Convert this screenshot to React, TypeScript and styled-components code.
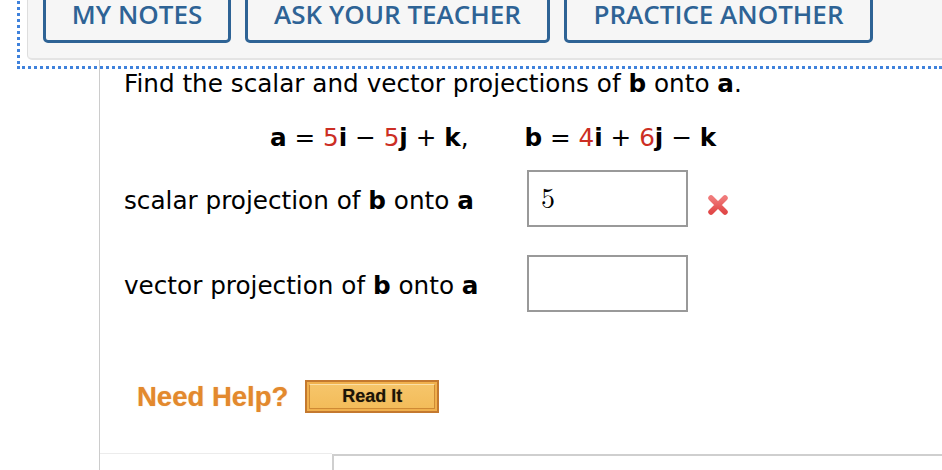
import React from "react";
import styled, { createGlobalStyle } from "styled-components";

const Global = createGlobalStyle`
  html, body { margin: 0; padding: 0; background: #fff; }
  body { width: 942px; height: 470px; overflow: hidden; font-family: "DejaVu Sans", Verdana, sans-serif; }
`;

const Page = styled.div`
  width: 942px;
  height: 470px;
  display: flex;
  flex-direction: column;
  overflow: hidden;
`;

const Header = styled.div`
  position: relative;
  margin-left: 27px;
  background: #f6f6f6;
  border-left: 1px solid #dedede;
  border-bottom: 2px solid #e4e4e4;
  border-bottom-left-radius: 5px;
  padding: 0 0 15px 15px;
  display: flex;
  gap: 14px;
  &::after {
    content: "";
    position: absolute;
    left: -11px;
    top: -10px;
    right: 0;
    bottom: -11px;
    border-left: 3px dotted #3f82dc;
    border-bottom: 3px dotted #3f82dc;
    pointer-events: none;
  }
`;

const TabButton = styled.button<{ $w: number }>`
  width: ${(p) => p.$w}px;
  height: 62px;
  margin-top: -19px;
  box-sizing: border-box;
  background: #f6f6f6;
  border: 3px solid #2e6395;
  border-radius: 5px;
  color: #2e6395;
  font-family: "Open Sans", sans-serif;
  font-size: 26px;
  font-weight: 600;
  line-height: 30px;
  display: flex;
  align-items: flex-end;
  justify-content: center;
  padding: 0 0 11px;
`;

const Body = styled.div`
  margin-left: 99px;
  border-left: 1px solid #cccccc;
  padding: 10px 0 0 24px;
  flex: 1;
  display: flex;
  flex-direction: column;
  color: #000;
  font-family: "DejaVu Sans", Verdana, sans-serif;
  font-size: 24.7px;
  line-height: 28px;
`;

const Prompt = styled.div``;

const Equation = styled.div`
  margin: 26px 0 0 146px;
  display: flex;
  gap: 56px;
`;

const Coef = styled.span`
  color: #cc2e24;
`;

const Rows = styled.div`
  margin-top: 18px;
  display: grid;
  grid-template-columns: 403px 161px auto;
  grid-auto-rows: 57px;
  row-gap: 28px;
  align-items: center;
`;

const Label = styled.div`
  padding-top: 4px;
`;

const AnswerBox = styled.div`
  box-sizing: border-box;
  width: 161px;
  height: 57px;
  border: 2px solid #999;
  background: #fff;
  display: flex;
  align-items: center;
  padding-left: 12px;
  font-family: "Latin Modern Math", "Liberation Serif", serif;
  font-size: 28px;
`;

const Mark = styled.div`
  padding-left: 19px;
  padding-top: 13px;
  display: flex;
`;

const Help = styled.div`
  margin: 68px 0 0 13px;
  display: flex;
  align-items: center;
  gap: 17px;
`;

const HelpText = styled.span`
  font-family: "Liberation Sans", Arial, sans-serif;
  font-weight: bold;
  font-size: 27.5px;
  line-height: 33px;
  color: #e3892d;
  text-shadow: 0 0 1px rgba(227, 137, 45, 0.6);
`;

const ReadIt = styled.button`
  box-sizing: border-box;
  width: 134px;
  height: 33px;
  padding: 0;
  border: 2px solid #c4792f;
  background: #f0b04d;
  display: flex;
  align-items: stretch;
  justify-content: stretch;
`;

const ReadItInner = styled.span`
  flex: 1;
  margin: 2px;
  border: 1px solid #cf8a34;
  border-top-color: #fbe0a8;
  background: linear-gradient(#f6c56a, #f3bc5a);
  font-family: "Liberation Sans", Arial, sans-serif;
  font-weight: bold;
  font-size: 18px;
  color: #1c1408;
  display: flex;
  align-items: center;
  justify-content: center;
  text-shadow: 0 0 1px rgba(0,0,0,0.4);
`;

const Footer = styled.div`
  margin-top: auto;
  margin-left: -24px;
  height: 17px;
  display: flex;
`;

const FooterLeft = styled.div`
  width: 232px;
  border-top: 1px solid #ececec;
`;

const FooterBox = styled.div`
  flex: 1;
  border-top: 2px solid #cfcfcf;
  border-left: 2px solid #cfcfcf;
  margin-top: 1px;
`;

const Cross = () => (
  <svg width="22" height="22" viewBox="0 0 22 22">
    <defs>
      <linearGradient id="xg" x1="0" y1="0" x2="0" y2="1">
        <stop offset="0" stopColor="#f07a7a" />
        <stop offset="1" stopColor="#e14848" />
      </linearGradient>
    </defs>
    <path
      d="M4 4 L18 18 M18 4 L4 18"
      stroke="url(#xg)"
      strokeWidth="5.5"
      strokeLinecap="round"
      fill="none"
    />
  </svg>
);

export default function App() {
  return (
    <Page>
      <Global />
      <Header>
        <TabButton $w={188}>MY NOTES</TabButton>
        <TabButton $w={305}>ASK YOUR TEACHER</TabButton>
        <TabButton $w={309}>PRACTICE ANOTHER</TabButton>
      </Header>
      <Body>
        <Prompt>
          Find the scalar and vector projections of <b>b</b> onto <b>a</b>.
        </Prompt>
        <Equation>
          <span>
            <b>a</b> = <Coef>5</Coef><b>i</b> − <Coef>5</Coef><b>j</b> + <b>k</b>,
          </span>
          <span>
            <b>b</b> = <Coef>4</Coef><b>i</b> + <Coef>6</Coef><b>j</b> − <b>k</b>
          </span>
        </Equation>
        <Rows>
          <Label>
            scalar projection of <b>b</b> onto <b>a</b>
          </Label>
          <AnswerBox>5</AnswerBox>
          <Mark>
            <Cross />
          </Mark>
          <Label>
            vector projection of <b>b</b> onto <b>a</b>
          </Label>
          <AnswerBox />
          <div />
        </Rows>
        <Help>
          <HelpText>Need Help?</HelpText>
          <ReadIt>
            <ReadItInner>Read It</ReadItInner>
          </ReadIt>
        </Help>
        <Footer>
          <FooterLeft />
          <FooterBox />
        </Footer>
      </Body>
    </Page>
  );
}
